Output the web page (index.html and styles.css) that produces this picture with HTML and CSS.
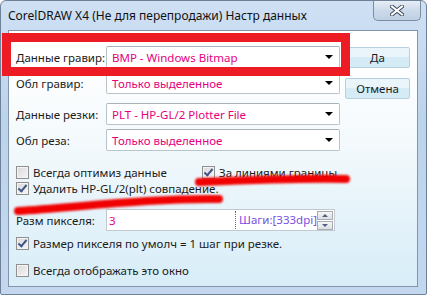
FILE: index.html
```html
<!DOCTYPE html>
<html lang="ru">
<head>
    <meta charset="UTF-8">
    <title>Настр данных</title>
    <link rel="stylesheet" href="styles.css">
</head>
<body>
    <div class="window">
        <div class="titlebar">
            <span class="title">CorelDRAW X4 (Не для перепродажи) Настр данных</span>
            <div class="close">
                <svg width="14" height="11" viewBox="0 0 14 11">
                    <path d="M2 1.5 L12 9.5 M12 1.5 L2 9.5" stroke="#3e4b5c" stroke-width="4" stroke-linecap="square"/>
                    <path d="M2 1.5 L12 9.5 M12 1.5 L2 9.5" stroke="#fff" stroke-width="2" stroke-linecap="square"/>
                </svg>
            </div>
        </div>

        <div class="client">
            <div class="top">
                <div class="fields">
                    <div class="field">
                        <span class="label">Данные гравир:</span>
                        <div class="select"><span>BMP - Windows Bitmap</span><i class="arrow"></i></div>
                    </div>
                    <div class="field">
                        <span class="label">Обл гравир:</span>
                        <div class="select"><span>Только выделенное</span><i class="arrow"></i></div>
                    </div>
                    <div class="field gap">
                        <span class="label">Данные резки:</span>
                        <div class="select"><span>PLT - HP-GL/2 Plotter File</span><i class="arrow"></i></div>
                    </div>
                    <div class="field">
                        <span class="label">Обл реза:</span>
                        <div class="select"><span>Только выделенное</span><i class="arrow"></i></div>
                    </div>
                </div>
                <div class="buttons">
                    <div class="btn">Да</div>
                    <div class="btn">Отмена</div>
                </div>
            </div>

            <div class="check-row first">
                <div class="check wide"><i class="box"></i>Всегда оптимиз данные</div>
                <div class="check"><i class="box on"></i>За линиями границы</div>
            </div>
            <div class="check-row">
                <div class="check"><i class="box on"></i>Удалить HP-GL/2(plt) совпадение.</div>
            </div>

            <div class="pixel-row">
                <span class="label">Разм пикселя:</span>
                <div class="spinbox">
                    <span class="value">3</span>
                    <span class="steps">Шаги:[333dpi]</span>
                    <div class="spin">
                        <div class="spin-btn"><i class="up"></i></div>
                        <div class="spin-btn"><i class="down"></i></div>
                    </div>
                </div>
            </div>

            <div class="check-row third">
                <div class="check"><i class="box on"></i>Размер пикселя по умолч = 1 шаг при резке.</div>
            </div>
            <div class="check-row fourth">
                <div class="check"><i class="box"></i>Всегда отображать это окно</div>
            </div>
        </div>

        <!-- red annotations drawn over the dialog -->
        <div class="mark-box"></div>
        <svg class="strokes" width="427" height="296" viewBox="0 0 427 296">
            <path d="M199 182 C 250 180, 300 178, 346 179" />
            <path d="M18 211 C 80 207, 150 198, 219 199" />
        </svg>
    </div>
</body>
</html>
```

FILE: styles.css
```css
body {
    margin: 0;
    background: #fff;
    font-family: 'Noto Sans', 'Open Sans', sans-serif;
    font-size: 12px;
    color: #1b1b1b;
}
.window {
    position: relative;
    width: 425px;
    height: 293px;
    border: 1px solid #6f8198;
    border-radius: 6px 6px 2px 2px;
    background: linear-gradient(#cfe0f4, #bcd3ec 40%, #c3d8ef);
    overflow: hidden;
}
.titlebar {
    display: flex;
    justify-content: space-between;
    height: 29px;
    padding-left: 7px;
}
.title {
    padding-top: 6px;
    color: #111;
    white-space: nowrap;
}
.close {
    width: 46px;
    height: 19px;
    margin-right: 5px;
    border: 1px solid #7d8ca0;
    border-top: none;
    border-radius: 0 0 5px 5px;
    background: linear-gradient(#e6eef8, #ccdaea 50%, #bfd0e4);
    display: flex;
    align-items: center;
    justify-content: center;
}
.client {
    margin-left: 7px;
    width: 408px;
    height: 255px;
    border: 1px solid #8495ab;
    background: linear-gradient(#fff 10%, #f3f9fc 45%, #d7edf8);
    font-size: 11.5px;
    line-height: 15px;
    white-space: nowrap;
}
.top {
    display: flex;
}
.fields {
    padding: 15px 0 0 7px;
}
.field {
    display: flex;
    align-items: center;
    height: 22px;
    margin-bottom: 4px;
}
.field.gap {
    margin-top: 9px;
}
.label {
    width: 90px;
    flex-shrink: 0;
}
.select {
    height: 20px;
    border: 1px solid #b9c3cc;
    border-top-color: #a9b1b9;
    border-radius: 2px;
    background: #fff;
    display: flex;
    align-items: center;
    justify-content: space-between;
    padding-left: 5px;
    width: 227px;
    color: #e5007e;
}
.arrow {
    width: 0;
    height: 0;
    margin-right: 6px;
    border-left: 4px solid transparent;
    border-right: 4px solid transparent;
    border-top: 4px solid #000;
}
.buttons {
    padding: 16px 0 0 5px;
}
.btn {
    width: 63px;
    height: 19px;
    margin-bottom: 10px;
    border: 1px solid #b7d0e0;
    border-radius: 2px;
    background: linear-gradient(#e9f5fb 50%, #d5ecf6 50%);
    text-align: center;
    line-height: 19px;
}
.check-row {
    display: flex;
    height: 16px;
    padding-left: 7px;
    align-items: center;
}
.check-row.first {
    margin-top: 9px;
}
.check-row.third {
    margin-top: 4px;
}
.check-row.fourth {
    margin-top: 11px;
}
.check {
    display: flex;
    align-items: center;
}
.check.wide {
    width: 186px;
}
.box {
    width: 11px;
    height: 11px;
    margin-right: 4px;
    border: 1px solid #8f8f8f;
    background: linear-gradient(135deg, #d8d8d8, #f6f6f6);
    box-shadow: inset 0 0 0 1px #f4f4f4;
    position: relative;
    flex-shrink: 0;
}
.box.on::after {
    content: '';
    position: absolute;
    left: 3px;
    top: 0;
    width: 3px;
    height: 7px;
    border-right: 2px solid #3f5689;
    border-bottom: 2px solid #3f5689;
    transform: rotate(40deg);
}
.pixel-row {
    display: flex;
    align-items: center;
    margin-top: 13px;
    padding-left: 7px;
}
.spinbox {
    width: 227px;
    height: 20px;
    border: 1px solid #c3c9cf;
    background: #fff;
    display: flex;
    align-items: center;
}
.value {
    width: 126px;
    padding-left: 2px;
    color: #e5007e;
}
.steps {
    height: 18px;
    line-height: 18px;
    padding-left: 3px;
    border-left: 1px dotted #7a4de0;
    color: #7a4de0;
}
.spin {
    margin-left: auto;
    margin-right: 1px;
    display: flex;
    flex-direction: column;
    gap: 1px;
}
.spin-btn {
    width: 14px;
    height: 7px;
    border: 1px solid #a6acb2;
    background: linear-gradient(#f6f6f6, #dcdfe3);
    display: flex;
    align-items: center;
    justify-content: center;
}
.up {
    border-left: 3px solid transparent;
    border-right: 3px solid transparent;
    border-bottom: 3px solid #4d6185;
}
.down {
    border-left: 3px solid transparent;
    border-right: 3px solid transparent;
    border-top: 3px solid #4d6185;
}
.mark-box {
    position: absolute;
    left: 1px;
    top: 32px;
    width: 330px;
    height: 25px;
    border: 9px solid #ed1c24;
}
.strokes {
    position: absolute;
    left: -1px;
    top: -1px;
    pointer-events: none;
}
.strokes path {
    fill: none;
    stroke: #f00000;
    stroke-width: 8;
    stroke-linecap: round;
    filter: blur(0.8px);
}
```
